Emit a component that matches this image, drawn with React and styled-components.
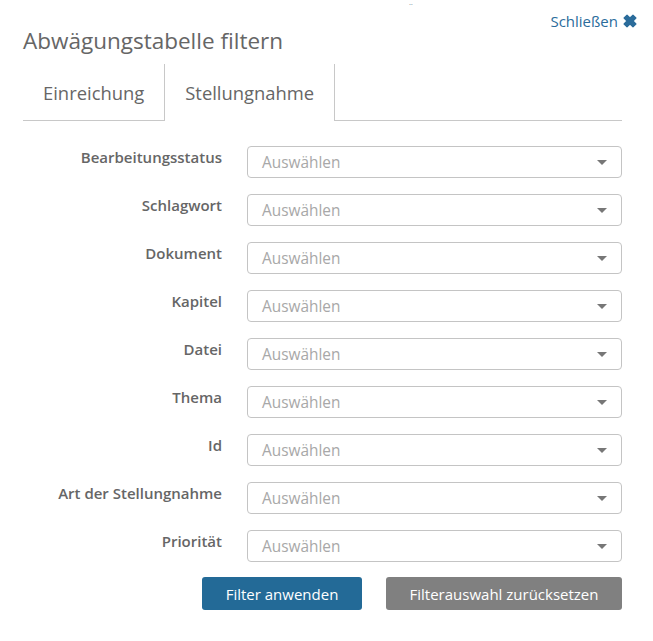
import styled, { createGlobalStyle } from "styled-components";
import { useState } from "react";

const GlobalStyle = createGlobalStyle`
  html, body {
    margin: 0;
    padding: 0;
    background: #fff;
  }
  body {
    font-family: "Open Sans", "Noto Sans", sans-serif;
    color: #666;
  }
`;

const Modal = styled.div`
  position: relative;
  width: 653px;
  padding: 10px 31px 0 23px;
  box-sizing: border-box;
`;

const Stray = styled.span`
  position: absolute;
  top: 2px;
  left: 408px;
  font-size: 10px;
  line-height: 12px;
  color: #7a8ea0;
`;

const CloseRow = styled.div`
  display: flex;
  justify-content: flex-end;
  margin-right: -16px;
  height: 22px;
`;

const CloseLink = styled.a`
  display: flex;
  align-items: center;
  gap: 4px;
  font-size: 15px;
  color: #2b6c9b;
  text-decoration: none;
  cursor: pointer;

  svg {
    width: 16px;
    height: 16px;
  }
`;

const Title = styled.h1`
  margin: -6px 0 0;
  font-size: 22.5px;
  font-weight: 400;
  line-height: 30px;
  color: #666;
`;

const Tabs = styled.div`
  display: flex;
  margin-top: 8px;
  border-bottom: 1px solid #c8c8c8;
`;

const Tab = styled.div`
  display: flex;
  align-items: center;
  padding: 0 20px;
  font-size: 18.4px;
  color: #666;
  cursor: pointer;
  border-right: 1px solid #c8c8c8;
  box-sizing: border-box;
  margin-bottom: ${(p) => (p.$active ? "-1px" : "0")};
  height: ${(p) => (p.$active ? "57px" : "56px")};
  background: #fff;
`;

const Form = styled.div`
  display: grid;
  grid-template-columns: 199px 375px;
  column-gap: 25px;
  row-gap: 16px;
  margin-top: 25px;
`;

const Label = styled.label`
  text-align: right;
  font-size: 15px;
  font-weight: 600;
  line-height: 20px;
  padding-top: 1px;
  color: #666;
`;

const Select = styled.div`
  display: flex;
  align-items: center;
  justify-content: space-between;
  height: 32px;
  box-sizing: border-box;
  padding: 0 14px 0 14px;
  border: 1px solid #c4c4c4;
  border-radius: 4px;
  font-size: 15.4px;
  color: #a8a8a8;
  cursor: pointer;
`;

const Caret = styled.span`
  width: 0;
  height: 0;
  border-left: 5px solid transparent;
  border-right: 5px solid transparent;
  border-top: 5px solid #777;
`;

const Actions = styled.div`
  display: flex;
  justify-content: flex-end;
  gap: 24px;
  margin-top: 15px;
`;

const Button = styled.button`
  height: 33px;
  width: ${(p) => (p.$secondary ? "236px" : "160px")};
  padding: 0;
  border: none;
  border-radius: 3px;
  background: ${(p) => (p.$secondary ? "#808080" : "#236a97")};
  color: #fff;
  font-family: inherit;
  font-size: 15px;
  font-weight: 500;
  cursor: pointer;
`;

const fields = [
  "Bearbeitungsstatus",
  "Schlagwort",
  "Dokument",
  "Kapitel",
  "Datei",
  "Thema",
  "Id",
  "Art der Stellungnahme",
  "Priorität",
];

export default function App() {
  const [tab, setTab] = useState("stellungnahme");

  return (
    <Modal>
      <GlobalStyle />
      <Stray>¨</Stray>
      <CloseRow>
        <CloseLink>
          Schließen
          <svg viewBox="0 0 14 14">
            <path
              d="M1.8 4.4 L4.4 1.8 L7 4.4 L9.6 1.8 L12.2 4.4 L9.6 7 L12.2 9.6 L9.6 12.2 L7 9.6 L4.4 12.2 L1.8 9.6 L4.4 7 Z"
              fill="#2b6c9b"
              stroke="#2b6c9b"
              strokeWidth="1"
              strokeLinejoin="round"
            />
          </svg>
        </CloseLink>
      </CloseRow>
      <Title>Abwägungstabelle filtern</Title>
      <Tabs>
        <Tab $active={tab === "einreichung"} onClick={() => setTab("einreichung")}>
          Einreichung
        </Tab>
        <Tab $active={tab === "stellungnahme"} onClick={() => setTab("stellungnahme")}>
          Stellungnahme
        </Tab>
      </Tabs>
      <Form>
        {fields.map((f) => (
          <>
            <Label key={f + "-l"}>{f}</Label>
            <Select key={f + "-s"}>
              Auswählen
              <Caret />
            </Select>
          </>
        ))}
      </Form>
      <Actions>
        <Button>Filter anwenden</Button>
        <Button $secondary>Filterauswahl zurücksetzen</Button>
      </Actions>
    </Modal>
  );
}
